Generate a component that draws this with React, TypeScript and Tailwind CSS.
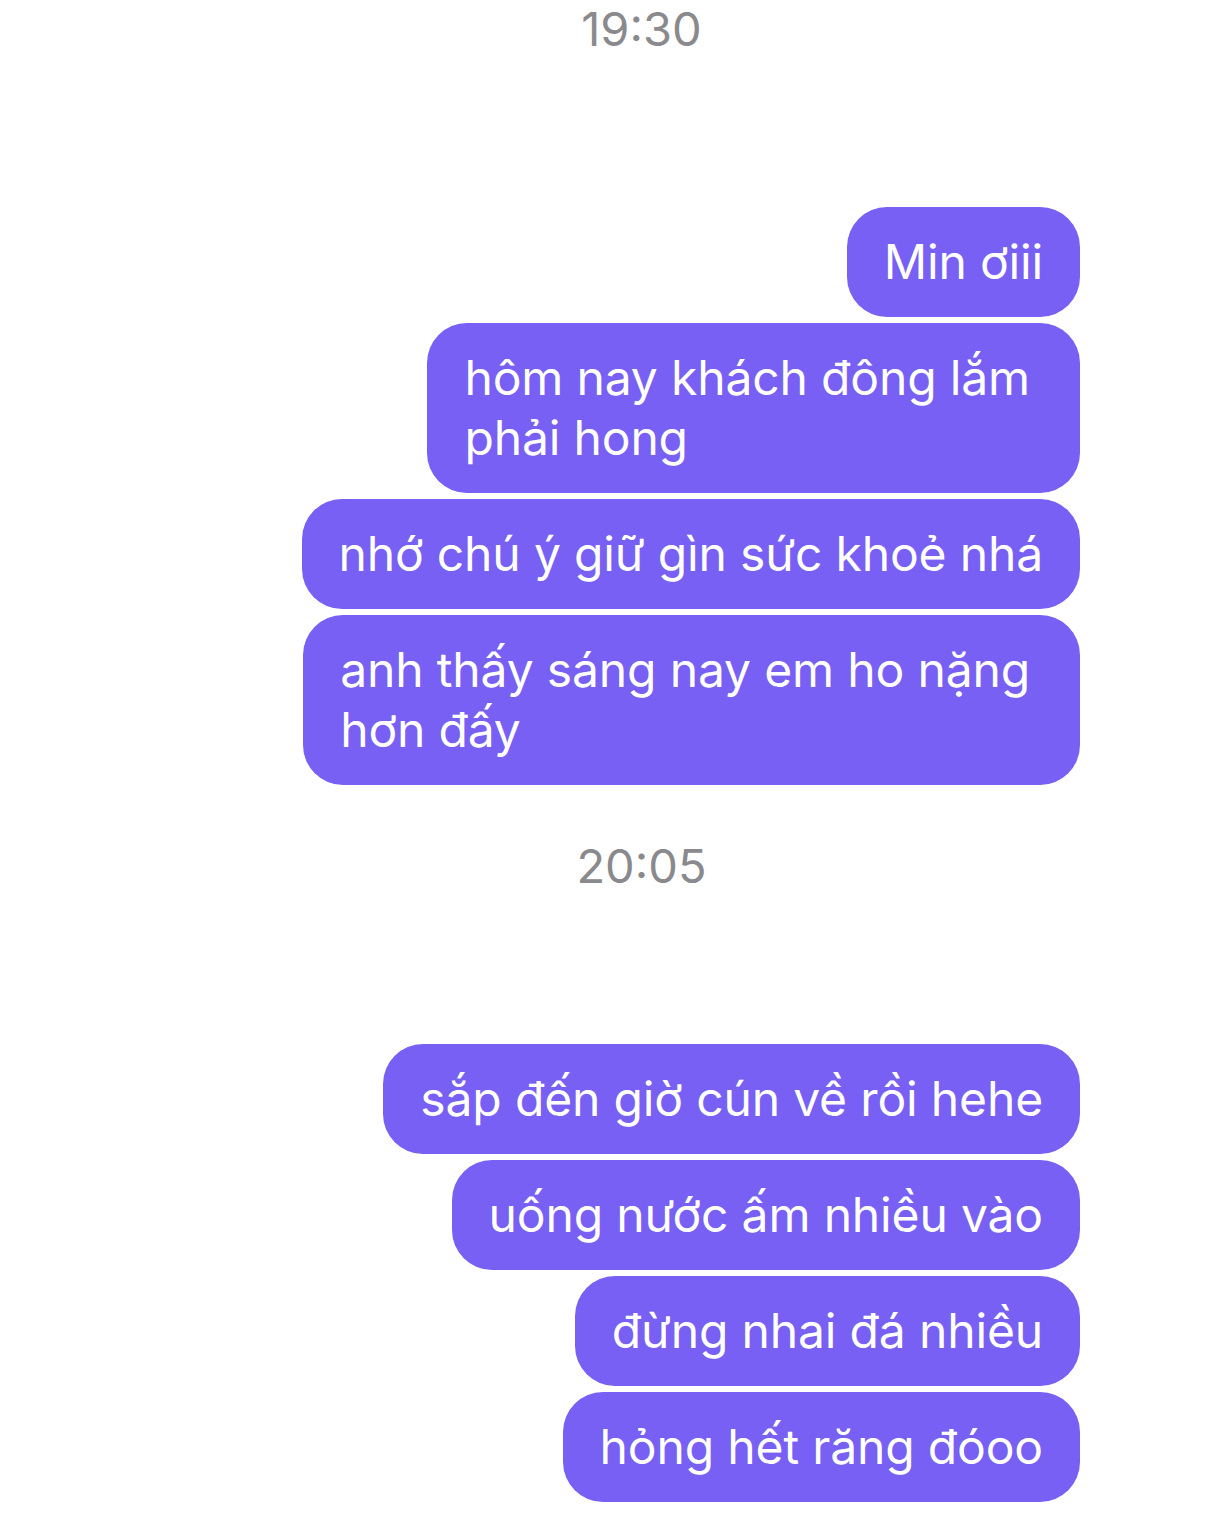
import React from 'react';

type Group = {
  time: string;
  messages: string[][];
};

const groups: Group[] = [
  {
    time: '19:30',
    messages: [
      ['Min ơiii'],
      ['hôm nay khách đông lắm', 'phải hong'],
      ['nhớ chú ý giữ gìn sức khoẻ nhá'],
      ['anh thấy sáng nay em ho nặng', 'hơn đấy'],
    ],
  },
  {
    time: '20:05',
    messages: [
      ['sắp đến giờ cún về rồi hehe'],
      ['uống nước ấm nhiều vào'],
      ['đừng nhai đá nhiều'],
      ['hỏng hết răng đóoo'],
    ],
  },
];

const Bubble = ({ lines }: { lines: string[] }) => (
  <div
    className={
      'w-fit rounded-[40px] bg-[#7760f3] py-[25px] pl-[37px] text-[48px] leading-[60px] tracking-[-0.15px] text-white ' +
      (lines.length > 1 ? 'pr-[50px]' : 'pr-[37px]')
    }
  >
    {lines.map((line, i) => (
      <div key={i} className="whitespace-nowrap">
        {line}
      </div>
    ))}
  </div>
);

const App = () => {
  return (
    <div
      className="min-h-[1531px] bg-white pt-[3px]"
      style={{ fontFamily: 'Inter, "Noto Sans", sans-serif' }}
    >
      {groups.map((group, gi) => (
        <div key={gi} className={gi === 0 ? '' : 'mt-[55px]'}>
          <div className="pl-[76px] text-center text-[47px] leading-[52px] text-[#8a8a8e]">{group.time}</div>
          <div className="mt-[152px] flex flex-col items-end gap-[6px] pr-[127px]">
            {group.messages.map((lines, mi) => (
              <Bubble key={mi} lines={lines} />
            ))}
          </div>
        </div>
      ))}
    </div>
  );
};

export default App;
